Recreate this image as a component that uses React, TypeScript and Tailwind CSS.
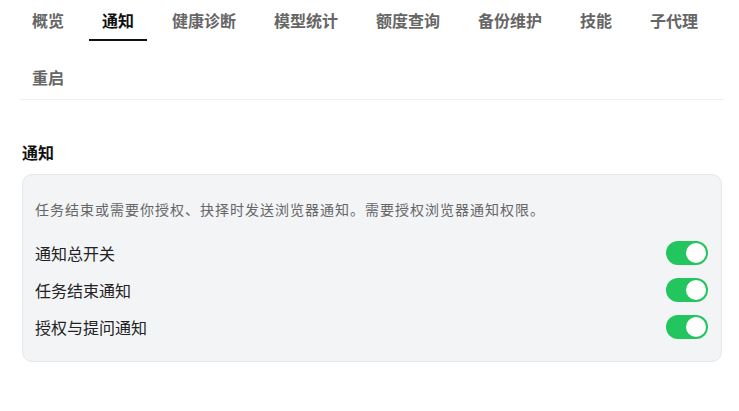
const tabs = ["概览", "通知", "健康诊断", "模型统计", "额度查询", "备份维护", "技能", "子代理", "重启"];

const rows = ["通知总开关", "任务结束通知", "授权与提问通知"];

const Toggle = () => (
  <button
    type="button"
    className="relative flex h-6 w-[42px] shrink-0 items-center rounded-full bg-[#22c55e]"
  >
    <span className="absolute right-[2px] h-5 w-5 rounded-full bg-white" />
  </button>
);

const App = () => {
  return (
    <div
      className="min-h-screen bg-white text-[#1f1f1f]"
      style={{ fontFamily: '"Noto Sans CJK SC", "Noto Sans", sans-serif' }}
    >
      <nav className="ml-[19px] flex w-[705px] flex-wrap gap-x-3 gap-y-4 border-b border-[#f0f0f0] pb-px">
        {tabs.map((t) => (
          <div
            key={t}
            className={
              t === "通知"
                ? "flex h-[41px] items-center border-b-2 border-[#111] px-[13px] text-[16px] font-bold leading-none text-[#111]"
                : "flex h-[41px] items-center border-b-2 border-transparent px-[13px] text-[16px] font-bold leading-none text-[#666]"
            }
          >
            {t}
          </div>
        ))}
      </nav>

      <section className="ml-[22px] w-[700px] pt-[40px]">
        <h2 className="text-[16px] font-bold leading-6 text-[#111]">通知</h2>
        <div className="mt-[10px] rounded-[10px] border border-[#e5e7eb] bg-[#f3f4f6] pt-6 pr-[13px] pb-[22px] pl-3">
          <p className="text-[14px] leading-5 tracking-[1px] text-[#666]">
            任务结束或需要你授权、抉择时发送浏览器通知。需要授权浏览器通知权限。
          </p>
          <div className="mt-[22px] flex flex-col gap-[13px]">
            {rows.map((r) => (
              <div key={r} className="flex h-6 items-center justify-between">
                <span className="text-[16px] leading-none text-[#222]">{r}</span>
                <Toggle />
              </div>
            ))}
          </div>
        </div>
      </section>
    </div>
  );
};

export default App;
